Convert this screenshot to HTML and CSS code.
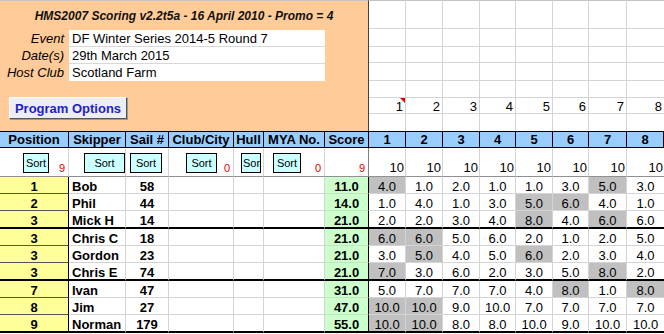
FILE: index.html
```html
<!DOCTYPE html>
<html lang="en">
<head>
    <meta charset="UTF-8">
    <meta name="viewport" content="width=device-width, initial-scale=1.0">
    <title>HMS2007 Scoring</title>
    <link rel="stylesheet" href="styles.css">
</head>
<body>
    <table class="sheet">
        <colgroup>
            <col class="w-pos">
            <col class="w-skip">
            <col class="w-sail">
            <col class="w-club">
            <col class="w-hull">
            <col class="w-mya">
            <col class="w-score">
            <col class="w-race">
            <col class="w-race">
            <col class="w-race">
            <col class="w-narrow">
            <col class="w-race">
            <col class="w-narrow">
            <col class="w-wide">
            <col class="w-race">
        </colgroup>

        <!-- event panel + empty grid on the right -->
        <tr class="t1">
            <td class="panel" colspan="7" rowspan="7">
                <div class="title">HMS2007 Scoring v2.2t5a - 16 April 2010 - Promo = 4</div>
                <div class="info">
                    <span class="lbl">Event</span><span class="val">DF Winter Series 2014-5 Round 7</span>
                    <span class="lbl">Date(s)</span><span class="val">29th March 2015</span>
                    <span class="lbl">Host Club</span><span class="val">Scotland Farm</span>
                </div>
                <button class="options">Program Options</button>
            </td>
            <td></td><td></td><td></td><td></td><td></td><td></td><td></td><td></td>
        </tr>
        <tr class="t2"><td></td><td></td><td></td><td></td><td></td><td></td><td></td><td></td></tr>
        <tr class="t3"><td></td><td></td><td></td><td></td><td></td><td></td><td></td><td></td></tr>
        <tr class="t4"><td></td><td></td><td></td><td></td><td></td><td></td><td></td><td></td></tr>
        <tr class="t5"><td></td><td></td><td></td><td></td><td></td><td></td><td></td><td></td></tr>
        <tr class="t6">
            <td class="rn note">1</td><td class="rn">2</td><td class="rn">3</td><td class="rn">4</td>
            <td class="rn">5</td><td class="rn">6</td><td class="rn">7</td><td class="rn">8</td>
        </tr>
        <tr class="t7"><td></td><td></td><td></td><td></td><td></td><td></td><td></td><td></td></tr>

        <!-- column titles -->
        <tr class="head">
            <td>Position</td><td>Skipper</td><td>Sail #</td><td>Club/City</td><td>Hull</td><td>MYA No.</td><td>Score</td>
            <td>1</td><td>2</td><td>3</td><td>4</td><td>5</td><td>6</td><td>7</td><td>8</td>
        </tr>

        <!-- sort buttons -->
        <tr class="sorts">
            <td><div class="sortbox"><button class="sort b-pos">Sort</button><span class="cnt">9</span></div></td>
            <td><div class="sortbox"><button class="sort b-skip">Sort</button></div></td>
            <td><div class="sortbox"><button class="sort b-sail">Sort</button></div></td>
            <td><div class="sortbox"><button class="sort b-club">Sort</button><span class="cnt">0</span></div></td>
            <td><div class="sortbox"><button class="sort b-hull">Sor</button></div></td>
            <td><div class="sortbox"><button class="sort b-mya">Sort</button><span class="cnt">0</span></div></td>
            <td class="score-sort"><div class="sortbox"><span class="cnt">9</span></div></td>
            <td class="disc">10</td><td class="disc">10</td><td class="disc">10</td><td class="disc">10</td>
            <td class="disc">10</td><td class="disc">10</td><td class="disc">10</td><td class="disc">10</td>
        </tr>

        <!-- results -->
        <tr class="row">
            <td class="pos">1</td><td class="skip">Bob</td><td class="sail">58</td><td></td><td></td><td></td><td class="score">11.0</td>
            <td class="r drop">4.0</td><td class="r">1.0</td><td class="r">2.0</td><td class="r">1.0</td><td class="r">1.0</td><td class="r">3.0</td><td class="r drop">5.0</td><td class="r">3.0</td>
        </tr>
        <tr class="row">
            <td class="pos">2</td><td class="skip">Phil</td><td class="sail">44</td><td></td><td></td><td></td><td class="score">14.0</td>
            <td class="r">1.0</td><td class="r">4.0</td><td class="r">1.0</td><td class="r">3.0</td><td class="r drop">5.0</td><td class="r drop">6.0</td><td class="r">4.0</td><td class="r">1.0</td>
        </tr>
        <tr class="row grp">
            <td class="pos">3</td><td class="skip">Mick H</td><td class="sail">14</td><td></td><td></td><td></td><td class="score">21.0</td>
            <td class="r">2.0</td><td class="r">2.0</td><td class="r">3.0</td><td class="r">4.0</td><td class="r drop">8.0</td><td class="r">4.0</td><td class="r drop">6.0</td><td class="r">6.0</td>
        </tr>
        <tr class="row">
            <td class="pos">3</td><td class="skip">Chris C</td><td class="sail">18</td><td></td><td></td><td></td><td class="score">21.0</td>
            <td class="r drop">6.0</td><td class="r drop">6.0</td><td class="r">5.0</td><td class="r">6.0</td><td class="r">2.0</td><td class="r">1.0</td><td class="r">2.0</td><td class="r">5.0</td>
        </tr>
        <tr class="row">
            <td class="pos">3</td><td class="skip">Gordon</td><td class="sail">23</td><td></td><td></td><td></td><td class="score">21.0</td>
            <td class="r">3.0</td><td class="r drop">5.0</td><td class="r">4.0</td><td class="r">5.0</td><td class="r drop">6.0</td><td class="r">2.0</td><td class="r">3.0</td><td class="r">4.0</td>
        </tr>
        <tr class="row grp">
            <td class="pos">3</td><td class="skip">Chris E</td><td class="sail">74</td><td></td><td></td><td></td><td class="score">21.0</td>
            <td class="r drop">7.0</td><td class="r">3.0</td><td class="r">6.0</td><td class="r">2.0</td><td class="r">3.0</td><td class="r">5.0</td><td class="r drop">8.0</td><td class="r">2.0</td>
        </tr>
        <tr class="row">
            <td class="pos">7</td><td class="skip">Ivan</td><td class="sail">47</td><td></td><td></td><td></td><td class="score">31.0</td>
            <td class="r">5.0</td><td class="r">7.0</td><td class="r">7.0</td><td class="r">7.0</td><td class="r">4.0</td><td class="r drop">8.0</td><td class="r">1.0</td><td class="r drop">8.0</td>
        </tr>
        <tr class="row">
            <td class="pos">8</td><td class="skip">Jim</td><td class="sail">27</td><td></td><td></td><td></td><td class="score">47.0</td>
            <td class="r drop">10.0</td><td class="r drop">10.0</td><td class="r">9.0</td><td class="r">10.0</td><td class="r">7.0</td><td class="r">7.0</td><td class="r">7.0</td><td class="r">7.0</td>
        </tr>
        <tr class="row grp">
            <td class="pos">9</td><td class="skip">Norman</td><td class="sail">179</td><td></td><td></td><td></td><td class="score">55.0</td>
            <td class="r drop">10.0</td><td class="r drop">10.0</td><td class="r">8.0</td><td class="r">8.0</td><td class="r">10.0</td><td class="r">9.0</td><td class="r">10.0</td><td class="r">10.0</td>
        </tr>
    </table>
</body>
</html>
```

FILE: styles.css
```css
body{
    margin: 0;
    background-color: #fff;
    color: #000;
    font-family: "Liberation Sans", Arial, sans-serif;
}

.sheet{
    table-layout: fixed;
    border-collapse: separate;
    border-spacing: 0;
    width: 664px;
    font-size: 13px;
}
.w-pos{ width: 69px; }
.w-skip{ width: 57px; }
.w-sail{ width: 43px; }
.w-club{ width: 65px; }
.w-hull{ width: 30px; }
.w-mya{ width: 61px; }
.w-score{ width: 44px; }
.w-race{ width: 37px; }
.w-narrow{ width: 36px; }
.w-wide{ width: 38px; }

td{
    padding: 0;
    border-right: 1px solid #d4d4d4;
    border-bottom: 1px solid #d4d4d4;
    vertical-align: bottom;
    line-height: 12px;
    white-space: nowrap;
    overflow: hidden;
}
td:last-child{
    border-right: none;
}

/* top area */
.t1{ height: 29px; }
.t2{ height: 18px; }
.t3{ height: 16px; }
.t4{ height: 18px; }
.t5{ height: 17px; }
.t6{ height: 16px; }
.t7{ height: 17px; }
.t1 td{
    border-top: 1px solid #c4c4c4;
}
.t7 td{
    border-bottom: none;
}

.panel{
    background-color: #ffcc99;
    vertical-align: top;
    border-right: 1px solid #404040;
    border-bottom: none;
}
.title{
    height: 29px;
    box-sizing: border-box;
    padding-top: 8px;
    text-align: center;
    font-size: 12px;
    line-height: 14px;
    font-weight: bold;
    font-style: italic;
    color: #111;
}
.info{
    display: grid;
    grid-template-columns: 69px 256px;
    grid-auto-rows: 17px;
    line-height: 17px;
}
.lbl{
    text-align: right;
    padding-right: 5px;
    font-style: italic;
}
.val{
    background-color: #fff;
    padding-left: 3px;
    border-bottom: 1px solid #d8d8d8;
    box-sizing: border-box;
}
.val:last-child{
    border-bottom: none;
}
.options{
    display: block;
    margin: 16px 0 0 9px;
    width: 118px;
    height: 22px;
    padding: 0;
    font: bold 13px "Liberation Sans", Arial, sans-serif;
    color: #1f1fc4;
    background-color: #ededf5;
    border: 1px solid;
    border-color: #fff #555 #555 #fff;
    box-shadow: 1px 1px 0 #9a9a9a;
}

.rn{
    text-align: right;
    padding-right: 2px;
}
.note{
    position: relative;
}
.note::after{
    content: "";
    position: absolute;
    top: 0;
    right: 0;
    border-top: 5px solid #e00000;
    border-left: 5px solid transparent;
}

/* header */
.head{ height: 17px; }
.head td{
    background-color: #99ccff;
    border-top: 1px solid #000;
    border-right: 1px solid #000;
    border-bottom: 1px solid #000;
    font-weight: bold;
    text-align: center;
    vertical-align: middle;
    line-height: 15px;
}

/* sort row */
.sorts{ height: 29px; }
.sorts td{
    border-bottom-color: #909090;
}
.sortbox{
    display: flex;
    height: 28px;
}
.sort{
    align-self: flex-start;
    margin-top: 5px;
    height: 20px;
    padding: 0;
    font: 11px "Liberation Sans", Arial, sans-serif;
    color: #000;
    background-color: #ccffff;
    border: 1px solid #000;
    overflow: hidden;
    white-space: nowrap;
}
.b-pos{ margin-left: 23px; width: 26px; }
.b-skip{ margin-left: 15px; width: 41px; }
.b-sail{ margin-left: 4px; width: 32px; }
.b-club{ margin-left: 17px; width: 31px; }
.b-hull{ margin-left: 7px; width: 20px; text-align: left; padding-left: 1px; }
.b-mya{ margin-left: 9px; width: 28px; }
.cnt{
    align-self: flex-end;
    margin-left: auto;
    padding: 0 3px 2px 0;
    font-size: 11px;
    line-height: 12px;
    color: #e00000;
}
.disc{
    text-align: right;
    padding: 0 1px 2px 0;
}

/* results */
.row{ height: 17px; }
.grp{ height: 18px; }
.pos{
    background-color: #ffff99;
    border-right: 1px solid #000;
    border-bottom: 1px solid #555;
    font-weight: bold;
    text-align: center;
}
.skip{
    font-weight: bold;
    padding-left: 3px;
}
.sail{
    font-weight: bold;
    text-align: center;
}
.score{
    background-color: #ccffcc;
    border-right: 1px solid #000;
    border-bottom-color: #bfe6bf;
    font-weight: bold;
    text-align: center;
}
.score-sort{
    border-right: 1px solid #808080;
}
.r{
    text-align: center;
}
.drop{
    background-color: #c0c0c0;
}
tr.grp td{
    border-bottom: 2px solid #000;
}
```
